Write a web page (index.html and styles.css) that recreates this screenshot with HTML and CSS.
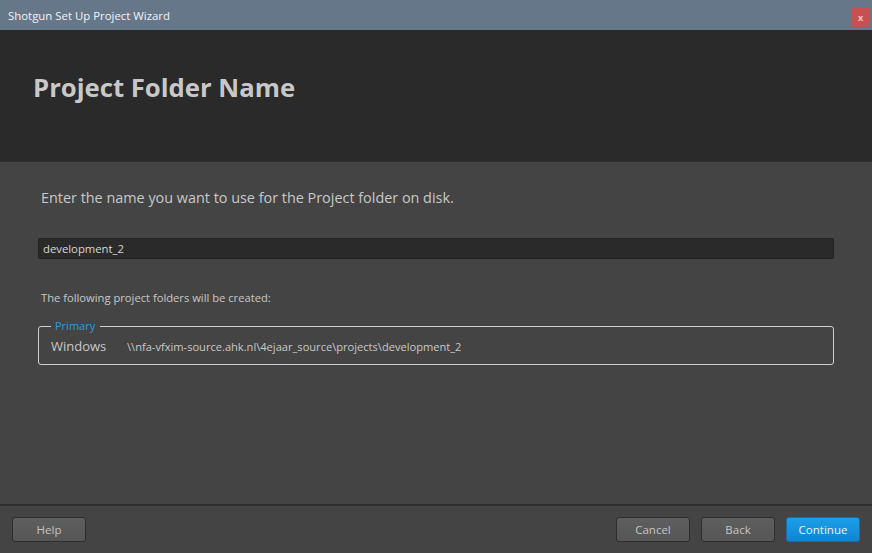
FILE: index.html
```html
<!DOCTYPE html>
<html>
<head>
<meta charset="utf-8">
<link rel="stylesheet" href="styles.css">
</head>
<body>
<div class="window">
  <div class="titlebar">
    <span class="title">Shotgun Set Up Project Wizard</span>
    <span class="close">x</span>
  </div>
  <div class="header">
    <h1>Project Folder Name</h1>
  </div>
  <div class="content">
    <p class="lead">Enter the name you want to use for the Project folder on disk.</p>
    <div class="input">development_2</div>
    <p class="note">The following project folders will be created:</p>
    <div class="group">
      <span class="legend">Primary</span>
      <div class="row"><span class="os">Windows</span><span class="path">\\nfa-vfxim-source.ahk.nl\4ejaar_source\projects\development_2</span></div>
    </div>
  </div>
  <div class="footer">
    <button class="btn">Help</button>
    <div class="spacer"></div>
    <button class="btn">Cancel</button>
    <button class="btn">Back</button>
    <button class="btn primary">Continue</button>
  </div>
</div>
</body>
</html>
```
FILE: styles.css
```css
html, body { margin: 0; padding: 0; background: #444; }
body { font-family: "Open Sans", "Noto Sans", sans-serif; }
.window { width: 872px; height: 553px; display: flex; flex-direction: column; background: #444444; }
.titlebar { height: 30px; background: #67778a; display: flex; align-items: center; justify-content: space-between; padding: 0 2px 0 8px; box-sizing: border-box; flex: none; }
.title { color: #f2f2f2; font-size: 11.4px; }
.close { width: 19px; height: 19px; background: #c75050; color: #f0c8c8; font-size: 9px; font-weight: bold; display: flex; align-items: center; justify-content: center; margin-top: 4px; }
.header { height: 132px; background: #2a2a2a; flex: none; box-sizing: border-box; padding: 42px 0 0 33px; border-bottom: 1px solid #303030; }
.header h1 { margin: 0; font-size: 25.7px; font-weight: bold; color: #c8c8c8; line-height: 32px; }
.content { flex: 1; padding: 25px 38px 0 38px; }
.lead { margin: 0 0 0 3px; font-size: 14.4px; color: #c8c8c8; line-height: 22px; }
.input { margin-top: 29px; height: 21px; background: #2a2a2a; border: 1px solid #232323; border-radius: 2px; box-sizing: border-box; color: #d8d8d8; font-size: 11.3px; line-height: 19px; padding-left: 4px; }
.note { margin: 31px 0 0 3px; font-size: 11.2px; color: #c8c8c8; line-height: 16px; }
.group { margin: 20px 0 0 0; border: 1px solid #d0d0d0; border-radius: 3px; height: 39px; box-sizing: border-box; position: relative; display: flex; align-items: center; padding: 1px 12px 0 12px; }
.legend { position: absolute; left: 12px; top: -9px; background: #444444; color: #2d9cd8; font-size: 11px; padding: 0 5px 0 4px; line-height: 16px; }
.row { display: flex; align-items: center; }
.os { color: #c8c8c8; font-size: 13px; width: 76px; }
.path { color: #c8c8c8; font-size: 11.1px; }
.footer { height: 49px; flex: none; border-top: 2px solid #2e2e2e; box-sizing: border-box; display: flex; align-items: flex-start; padding: 11px 12px 0 12px; gap: 11px; }
.spacer { flex: 1; }
.btn { width: 74px; height: 25px; font-family: "Open Sans", "Noto Sans", sans-serif; font-size: 11.5px; color: #c4c4c4; background: linear-gradient(#5e5e5e, #565656); border: 1px solid #2e2e2e; border-radius: 3px; padding: 0; }
.btn.primary { background: linear-gradient(#1d9ee8, #0d86d2); border-color: #1a6fa8; color: #e8f4ff; }
```
